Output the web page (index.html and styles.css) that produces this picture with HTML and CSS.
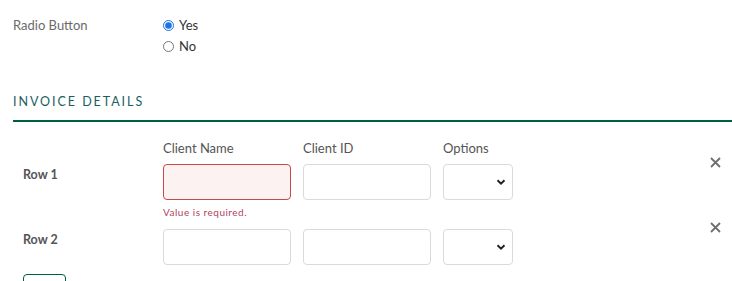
FILE: index.html
```html
<!DOCTYPE html>
<html>
<head>
<meta charset="utf-8">
<link rel="stylesheet" href="styles.css">
</head>
<body>
<div class="page">
  <div class="field">
    <div class="field-label">Radio Button</div>
    <div class="radios">
      <label class="radio"><input type="radio" name="r" checked><span>Yes</span></label>
      <label class="radio"><input type="radio" name="r"><span>No</span></label>
    </div>
  </div>

  <h2 class="section-title">INVOICE DETAILS</h2>

  <div class="grid">
    <div class="head-spacer"></div>
    <div class="col-head">Client Name</div>
    <div class="col-head">Client ID</div>
    <div class="col-head">Options</div>
    <div></div>

    <div class="row-label">Row 1</div>
    <div class="cell">
      <input class="input invalid" type="text">
      <div class="error">Value is required.</div>
    </div>
    <div class="cell"><input class="input" type="text"></div>
    <div class="cell"><select class="select"><option></option></select></div>
    <div class="remove"><svg width="11" height="11" viewBox="0 0 11 11"><path d="M1 1 L10 10 M10 1 L1 10" stroke="#6f6f6f" stroke-width="1.8" fill="none"/></svg></div>

    <div class="row-label">Row 2</div>
    <div class="cell"><input class="input" type="text"></div>
    <div class="cell"><input class="input" type="text"></div>
    <div class="cell"><select class="select"><option></option></select></div>
    <div class="remove"><svg width="11" height="11" viewBox="0 0 11 11"><path d="M1 1 L10 10 M10 1 L1 10" stroke="#6f6f6f" stroke-width="1.8" fill="none"/></svg></div>
  </div>

  <div class="actions"><button class="add-btn" aria-label="Add row"></button></div>
</div>
</body>
</html>
```
FILE: styles.css
```css
* { box-sizing: border-box; }
html, body { margin: 0; padding: 0; background: #fff; }
body {
  font-family: "Lato", "Open Sans", sans-serif;
  font-size: 13px;
  color: #555;
}
.page { padding: 17px 0 0 13px; overflow: hidden; height: 281px; }
.field { display: flex; }
.field-label { width: 150px; color: #6a6a6a; font-size: 13px; line-height: 17px; }
.radios { display: flex; flex-direction: column; gap: 4px; }
.radio { display: flex; align-items: center; gap: 5px; color: #333; font-size: 13px; line-height: 17px; }
.radio input { margin: 0; width: 11px; height: 11px; accent-color: #1a73e8; }
.section-title {
  margin: 39px 0 0 0;
  font-weight: normal;
  font-size: 12.5px;
  letter-spacing: 1.95px;
  color: #1a5e63;
  padding-bottom: 10px;
  border-bottom: 2px solid #00603b;
  line-height: 16px;
}
.grid {
  display: grid;
  grid-template-columns: 128px 128px 128px 70px 1fr;
  column-gap: 12px;
  margin: 18px 0 0 10px;
  align-items: start;
}
.col-head { color: #555; font-size: 13px; line-height: 17px; margin-bottom: 7px; }
.row-label { font-weight: bold; color: #555; font-size: 12.5px; padding-top: 3px; line-height: 16px; }
.cell { display: flex; flex-direction: column; }
.input, .select {
  height: 36px;
  border: 1px solid #dadada;
  border-radius: 4px;
  background: #fff;
  margin: 0;
  font: inherit;
  outline: none;
}
.input { width: 128px; }
.select {
  width: 70px;
  appearance: none;
  -webkit-appearance: none;
  background-image: url("data:image/svg+xml;utf8,<svg xmlns='http://www.w3.org/2000/svg' width='10' height='8' viewBox='0 0 10 8'><path d='M1.5 2.2 L5 5.6 L8.5 2.2' fill='none' stroke='%23222' stroke-width='2'/></svg>");
  background-repeat: no-repeat;
  background-position: right 6px center;
}
.input.invalid { border-color: #c9484a; background: #fdf2f2; }
.error { color: #b0445e; font-size: 10px; letter-spacing: 0.5px; line-height: 12px; margin-top: 6px; height: 23px; }
.remove {
  justify-self: end;
  margin-right: 11px;
  margin-top: -7px;
  line-height: 0;
}
.actions { margin: 9px 0 0 10px; }
.add-btn {
  display: block;
  width: 43px;
  height: 30px;
  border: 1px solid #00603b;
  border-radius: 4px;
  background: #fff;
  padding: 0;
}
```
